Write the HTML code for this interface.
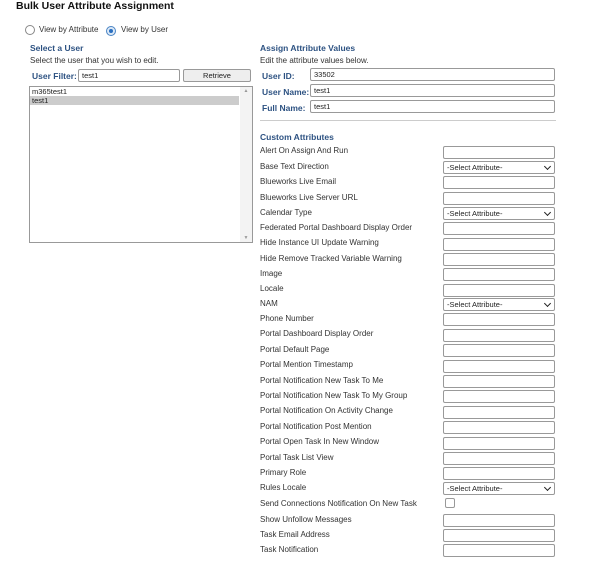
<!DOCTYPE html>
<html><head><meta charset="utf-8"><style>
body{margin:0;width:600px;height:568px;background:#fff;font-family:"Liberation Sans",Arial,sans-serif;font-size:8px;color:#333;position:relative;overflow:hidden}
.a{position:absolute;white-space:nowrap}
.h{color:#2d5282;font-weight:bold;font-size:8.5px}
.in{position:absolute;border:1px solid #999;border-radius:2px;background:#fff;box-sizing:border-box;font-size:7.5px;padding-left:3px;line-height:11px;color:#222}
.lb{position:absolute;left:260px;font-size:8px;color:#333;white-space:nowrap}
.f{left:443px;width:112px;height:13px}
.sel::after{content:"";position:absolute;right:4px;top:2px;width:4px;height:4px;border-right:1.5px solid #222;border-bottom:1.5px solid #222;transform:rotate(45deg)}
</style></head><body>
<div class="a" style="left:16px;top:0px;font-weight:bold;font-size:10.5px;color:#111">Bulk User Attribute Assignment</div>
<div class="a" style="left:25px;top:25px;width:8px;height:8px;border:1px solid #888;border-radius:50%"></div>
<div class="a" style="left:39px;top:25px">View by Attribute</div>
<div class="a" style="left:106px;top:26px;width:8px;height:8px;border:1px solid #4a84c4;border-radius:50%;background:#dbe8f6"></div>
<div class="a" style="left:109px;top:29px;width:4px;height:4px;border-radius:50%;background:#2a6fc0"></div>
<div class="a" style="left:121px;top:25px">View by User</div>

<div class="a h" style="left:30px;top:43px">Select a User</div>
<div class="a" style="left:30px;top:56px">Select the user that you wish to edit.</div>
<div class="a h" style="left:32px;top:71px">User Filter:</div>
<div class="in" style="left:78px;top:69px;width:102px;height:13px">test1</div>
<div class="in" style="left:183px;top:69px;width:68px;height:13px;background:#eee;text-align:center;padding:0">Retrieve</div>
<div class="in" style="left:29px;top:86px;width:224px;height:157px;border-radius:0;padding:0">
<div style="padding-left:2px;line-height:9px">m365test1</div>
<div style="padding-left:2px;line-height:9px;background:#ccc;width:207px">test1</div>
<div style="position:absolute;right:0;top:0;width:12px;height:155px;background:#f3f3f3;color:#999;font-size:5px;text-align:center;line-height:8px">▲<div style="position:absolute;bottom:0;width:12px">▼</div></div>
</div>

<div class="a h" style="left:260px;top:43px">Assign Attribute Values</div>
<div class="a" style="left:260px;top:56px">Edit the attribute values below.</div>
<div class="a h" style="left:262px;top:71px">User ID:</div>
<div class="in" style="left:310px;top:68px;width:245px;height:13px">33502</div>
<div class="a h" style="left:262px;top:87px">User Name:</div>
<div class="in" style="left:310px;top:84px;width:245px;height:13px">test1</div>
<div class="a h" style="left:262px;top:103px">Full Name:</div>
<div class="in" style="left:310px;top:100px;width:245px;height:13px">test1</div>
<div class="a" style="left:260px;top:120px;width:296px;height:1px;background:#ccc"></div>
<div class="a h" style="left:260px;top:132px">Custom Attributes</div>

<div class="lb" style="top:146px">Alert On Assign And Run</div><div class="in f" style="top:146px"></div>
<div class="lb" style="top:162px">Base Text Direction</div><div class="in f sel" style="top:161px">-Select Attribute-</div>
<div class="lb" style="top:177px">Blueworks Live Email</div><div class="in f" style="top:176px"></div>
<div class="lb" style="top:193px">Blueworks Live Server URL</div><div class="in f" style="top:192px"></div>
<div class="lb" style="top:208px">Calendar Type</div><div class="in f sel" style="top:207px">-Select Attribute-</div>
<div class="lb" style="top:223px">Federated Portal Dashboard Display Order</div><div class="in f" style="top:222px"></div>
<div class="lb" style="top:238px">Hide Instance UI Update Warning</div><div class="in f" style="top:238px"></div>
<div class="lb" style="top:254px">Hide Remove Tracked Variable Warning</div><div class="in f" style="top:253px"></div>
<div class="lb" style="top:269px">Image</div><div class="in f" style="top:268px"></div>
<div class="lb" style="top:284px">Locale</div><div class="in f" style="top:284px"></div>
<div class="lb" style="top:299px">NAM</div><div class="in f sel" style="top:298px">-Select Attribute-</div>
<div class="lb" style="top:314px">Phone Number</div><div class="in f" style="top:313px"></div>
<div class="lb" style="top:329px">Portal Dashboard Display Order</div><div class="in f" style="top:329px"></div>
<div class="lb" style="top:345px">Portal Default Page</div><div class="in f" style="top:344px"></div>
<div class="lb" style="top:360px">Portal Mention Timestamp</div><div class="in f" style="top:360px"></div>
<div class="lb" style="top:376px">Portal Notification New Task To Me</div><div class="in f" style="top:375px"></div>
<div class="lb" style="top:391px">Portal Notification New Task To My Group</div><div class="in f" style="top:390px"></div>
<div class="lb" style="top:406px">Portal Notification On Activity Change</div><div class="in f" style="top:406px"></div>
<div class="lb" style="top:422px">Portal Notification Post Mention</div><div class="in f" style="top:421px"></div>
<div class="lb" style="top:437px">Portal Open Task In New Window</div><div class="in f" style="top:437px"></div>
<div class="lb" style="top:453px">Portal Task List View</div><div class="in f" style="top:452px"></div>
<div class="lb" style="top:468px">Primary Role</div><div class="in f" style="top:467px"></div>
<div class="lb" style="top:483px">Rules Locale</div><div class="in f sel" style="top:482px">-Select Attribute-</div>
<div class="lb" style="top:499px">Send Connections Notification On New Task</div><div class="in" style="left:445px;top:498px;width:10px;height:10px"></div>
<div class="lb" style="top:515px">Show Unfollow Messages</div><div class="in f" style="top:514px"></div>
<div class="lb" style="top:530px">Task Email Address</div><div class="in f" style="top:529px"></div>
<div class="lb" style="top:545px">Task Notification</div><div class="in f" style="top:544px"></div>
</body></html>
